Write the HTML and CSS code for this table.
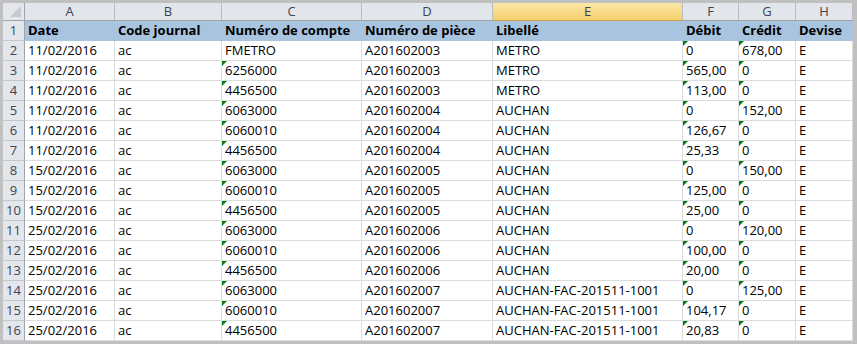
FILE: index.html
```html
<!DOCTYPE html>
<html lang="fr">
<head>
<meta charset="utf-8">
<link rel="stylesheet" href="styles.css">
</head>
<body>
<div class="frame">
  <div class="sheet">
    <div class="corner"><span class="corner-tri"></span></div>
    <div class="colh">A</div><div class="colh">B</div><div class="colh">C</div><div class="colh">D</div><div class="colh sel">E</div><div class="colh">F</div><div class="colh">G</div><div class="colh">H</div>

    <div class="rowh">1</div>
    <div class="c hd">Date</div><div class="c hd">Code journal</div><div class="c hd">Numéro de compte</div><div class="c hd">Numéro de pièce</div><div class="c hd">Libellé</div><div class="c hd">Débit</div><div class="c hd">Crédit</div><div class="c hd">Devise</div>

    <div class="rowh">2</div>
    <div class="c">11/02/2016</div><div class="c">ac</div><div class="c">FMETRO</div><div class="c">A201602003</div><div class="c">METRO</div><div class="c t">0</div><div class="c t">678,00</div><div class="c">E</div>

    <div class="rowh">3</div>
    <div class="c">11/02/2016</div><div class="c">ac</div><div class="c t">6256000</div><div class="c">A201602003</div><div class="c">METRO</div><div class="c t">565,00</div><div class="c t">0</div><div class="c">E</div>

    <div class="rowh">4</div>
    <div class="c">11/02/2016</div><div class="c">ac</div><div class="c t">4456500</div><div class="c">A201602003</div><div class="c">METRO</div><div class="c t">113,00</div><div class="c t">0</div><div class="c">E</div>

    <div class="rowh">5</div>
    <div class="c">11/02/2016</div><div class="c">ac</div><div class="c t">6063000</div><div class="c">A201602004</div><div class="c">AUCHAN</div><div class="c t">0</div><div class="c t">152,00</div><div class="c">E</div>

    <div class="rowh">6</div>
    <div class="c">11/02/2016</div><div class="c">ac</div><div class="c t">6060010</div><div class="c">A201602004</div><div class="c">AUCHAN</div><div class="c t">126,67</div><div class="c t">0</div><div class="c">E</div>

    <div class="rowh">7</div>
    <div class="c">11/02/2016</div><div class="c">ac</div><div class="c t">4456500</div><div class="c">A201602004</div><div class="c">AUCHAN</div><div class="c t">25,33</div><div class="c t">0</div><div class="c">E</div>

    <div class="rowh">8</div>
    <div class="c">15/02/2016</div><div class="c">ac</div><div class="c t">6063000</div><div class="c">A201602005</div><div class="c">AUCHAN</div><div class="c t">0</div><div class="c t">150,00</div><div class="c">E</div>

    <div class="rowh">9</div>
    <div class="c">15/02/2016</div><div class="c">ac</div><div class="c t">6060010</div><div class="c">A201602005</div><div class="c">AUCHAN</div><div class="c t">125,00</div><div class="c t">0</div><div class="c">E</div>

    <div class="rowh">10</div>
    <div class="c">15/02/2016</div><div class="c">ac</div><div class="c t">4456500</div><div class="c">A201602005</div><div class="c">AUCHAN</div><div class="c t">25,00</div><div class="c t">0</div><div class="c">E</div>

    <div class="rowh">11</div>
    <div class="c">25/02/2016</div><div class="c">ac</div><div class="c t">6063000</div><div class="c">A201602006</div><div class="c">AUCHAN</div><div class="c t">0</div><div class="c t">120,00</div><div class="c">E</div>

    <div class="rowh">12</div>
    <div class="c">25/02/2016</div><div class="c">ac</div><div class="c t">6060010</div><div class="c">A201602006</div><div class="c">AUCHAN</div><div class="c t">100,00</div><div class="c t">0</div><div class="c">E</div>

    <div class="rowh">13</div>
    <div class="c">25/02/2016</div><div class="c">ac</div><div class="c t">4456500</div><div class="c">A201602006</div><div class="c">AUCHAN</div><div class="c t">20,00</div><div class="c t">0</div><div class="c">E</div>

    <div class="rowh">14</div>
    <div class="c">25/02/2016</div><div class="c">ac</div><div class="c t">6063000</div><div class="c">A201602007</div><div class="c">AUCHAN-FAC-201511-1001</div><div class="c t">0</div><div class="c t">125,00</div><div class="c">E</div>

    <div class="rowh">15</div>
    <div class="c">25/02/2016</div><div class="c">ac</div><div class="c t">6060010</div><div class="c">A201602007</div><div class="c">AUCHAN-FAC-201511-1001</div><div class="c t">104,17</div><div class="c t">0</div><div class="c">E</div>

    <div class="rowh">16</div>
    <div class="c">25/02/2016</div><div class="c">ac</div><div class="c t">4456500</div><div class="c">A201602007</div><div class="c">AUCHAN-FAC-201511-1001</div><div class="c t">20,83</div><div class="c t">0</div><div class="c">E</div>
  </div>
</div>
</body>
</html>
```

FILE: styles.css
```css
html, body {
  margin: 0;
  padding: 0;
  background: #c0c0c0;
}

.frame {
  width: 857px;
  height: 344px;
  box-sizing: border-box;
  padding: 3px 4px 3px 3px;
  background: #c0c0c0;
}

.sheet {
  display: grid;
  grid-template-columns: 22px 90px 107px 140px 131px 190px 56px 57px 57px;
  grid-template-rows: 18px repeat(16, 20px);
  background: #ffffff;
  font-family: "Open Sans", "Noto Sans", sans-serif;
  font-size: 13px;
  color: #000;
}

.corner {
  position: relative;
  background: #e3e6ea;
  border-right: 1px solid #9ea4ab;
  border-bottom: 1px solid #9ea4ab;
}

.corner-tri {
  position: absolute;
  right: 3px;
  bottom: 3px;
  width: 0;
  height: 0;
  border-left: 11px solid transparent;
  border-bottom: 11px solid #c5c9ce;
}

.colh {
  display: flex;
  align-items: center;
  justify-content: center;
  background: #e2e5e9;
  border-right: 1px solid #b8bcc2;
  border-bottom: 1px solid #9ea4ab;
  color: #3c4454;
  font-size: 13px;
  line-height: 1;
}

.colh.sel {
  background: linear-gradient(#fbe7a6, #f6cf6c);
  border-bottom-color: #c9a04a;
}

.rowh {
  display: flex;
  align-items: center;
  justify-content: center;
  background: #e3e6ea;
  border-right: 1px solid #9ea4ab;
  border-bottom: 1px solid #c4c8cd;
  color: #3c4454;
  font-size: 13px;
  line-height: 1;
}

.c {
  position: relative;
  display: flex;
  align-items: flex-end;
  padding: 0 0 2px 3px;
  border-right: 1px solid #dadcdd;
  border-bottom: 1px solid #dadcdd;
  white-space: nowrap;
  overflow: hidden;
  line-height: 16px;
}

.c.hd {
  background: #a9c4df;
  border-right-color: #a9c4df;
  border-bottom-color: #a9c4df;
  font-weight: 700;
}

.c.t::before {
  content: "";
  position: absolute;
  left: 0;
  top: 0;
  width: 0;
  height: 0;
  border-top: 5px solid #0a7a1e;
  border-right: 5px solid transparent;
}
```
